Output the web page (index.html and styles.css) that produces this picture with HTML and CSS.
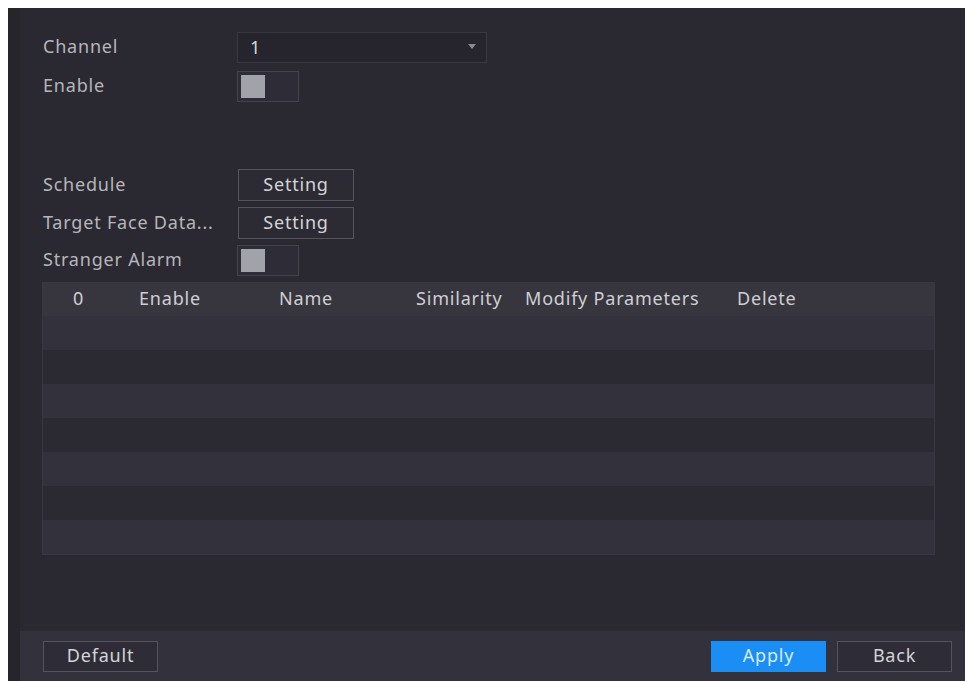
FILE: index.html
```html
<!DOCTYPE html>
<html lang="en">
<head>
    <meta charset="UTF-8">
    <title>Face Detection</title>
    <link rel="stylesheet" href="styles.css">
</head>
<body>
    <div class="panel">
        <div class="main">
            <div class="form-row first">
                <label class="label">Channel</label>
                <div class="select">
                    <span>1</span>
                    <span class="arrow"></span>
                </div>
            </div>
            <div class="form-row switch-row">
                <label class="label">Enable</label>
                <div class="toggle"><span class="knob"></span></div>
            </div>

            <div class="form-row spaced">
                <label class="label">Schedule</label>
                <button class="btn btn-setting">Setting</button>
            </div>
            <div class="form-row">
                <label class="label">Target Face Data...</label>
                <button class="btn btn-setting">Setting</button>
            </div>
            <div class="form-row switch-row">
                <label class="label">Stranger Alarm</label>
                <div class="toggle"><span class="knob"></span></div>
            </div>

            <div class="table">
                <div class="table-head">
                    <span>0</span>
                    <span>Enable</span>
                    <span>Name</span>
                    <span>Similarity</span>
                    <span>Modify Parameters</span>
                    <span>Delete</span>
                </div>
                <div class="table-row"></div>
                <div class="table-row"></div>
                <div class="table-row"></div>
                <div class="table-row"></div>
                <div class="table-row"></div>
                <div class="table-row"></div>
                <div class="table-row"></div>
            </div>
        </div>

        <div class="footer">
            <button class="btn btn-footer">Default</button>
            <div class="footer-right">
                <button class="btn btn-footer btn-apply">Apply</button>
                <button class="btn btn-footer">Back</button>
            </div>
        </div>
    </div>
</body>
</html>
```

FILE: styles.css
```css
body {
    margin: 8px;
    background-color: #ffffff;
    font-family: "Noto Sans", "Open Sans", sans-serif;
    font-size: 18px;
    letter-spacing: 0.8px;
}
.panel {
    width: 961px;
    height: 673px;
    background-color: #2a2931;
    display: flex;
    flex-direction: column;
    border-left: 12px solid #26252c;
    box-sizing: border-box;
}
.main {
    flex: 1;
    padding: 24px 0 0 23px;
}
.form-row {
    display: flex;
    align-items: center;
    height: 32px;
    margin-bottom: 6px;
}
.form-row.first {
    height: 31px;
    margin-bottom: 8px;
}
.form-row.switch-row {
    height: 31px;
}
.form-row.spaced {
    margin-top: 67px;
}
.label {
    width: 194px;
    color: #b6b6bb;
    white-space: nowrap;
    padding-bottom: 3px;
}
.select {
    width: 250px;
    height: 31px;
    box-sizing: border-box;
    background-color: #26252d;
    border: 1px solid #393842;
    color: #d6d6da;
    display: flex;
    align-items: center;
    justify-content: space-between;
    padding: 0 10px 2px 12px;
}
.arrow {
    width: 0;
    height: 0;
    border-left: 4px solid transparent;
    border-right: 4px solid transparent;
    border-top: 5px solid #8a8a92;
}
.toggle {
    width: 62px;
    height: 31px;
    box-sizing: border-box;
    border: 1px solid #44434d;
    background-color: #2e2d37;
    padding: 3px;
}
.knob {
    display: block;
    width: 24px;
    height: 23px;
    background-color: #a2a2aa;
}
.btn {
    font-family: inherit;
    font-size: 18px;
    letter-spacing: 0.8px;
    color: #d4d4d8;
    background-color: #2c2b34;
    border: 1px solid #55545e;
    cursor: pointer;
    padding: 0 0 2px;
}
.btn-setting {
    width: 116px;
    height: 32px;
    margin-left: 1px;
}
.table {
    width: 893px;
    border: 1px solid #393842;
    box-sizing: border-box;
    margin-left: -1px;
}
.table-head {
    display: grid;
    grid-template-columns: 66px 140px 137px 109px 212px 1fr;
    align-items: center;
    height: 33px;
    padding: 0 0 3px 30px;
    box-sizing: border-box;
    background-color: #37363f;
    color: #cfcfd3;
    white-space: nowrap;
}
.table-row {
    height: 34px;
    background-color: #33323c;
}
.table-row:nth-child(odd) {
    background-color: #2b2a33;
}
.footer {
    height: 50px;
    background-color: #33323c;
    display: flex;
    align-items: center;
    justify-content: space-between;
    padding: 0 17px 0 23px;
}
.footer-right {
    display: flex;
    gap: 11px;
}
.btn-footer {
    width: 115px;
    height: 31px;
    background-color: #2e2d37;
}
.btn-apply {
    background-color: #1a8ef5;
    border-color: #1a8ef5;
    color: #d8ecff;
}
```
